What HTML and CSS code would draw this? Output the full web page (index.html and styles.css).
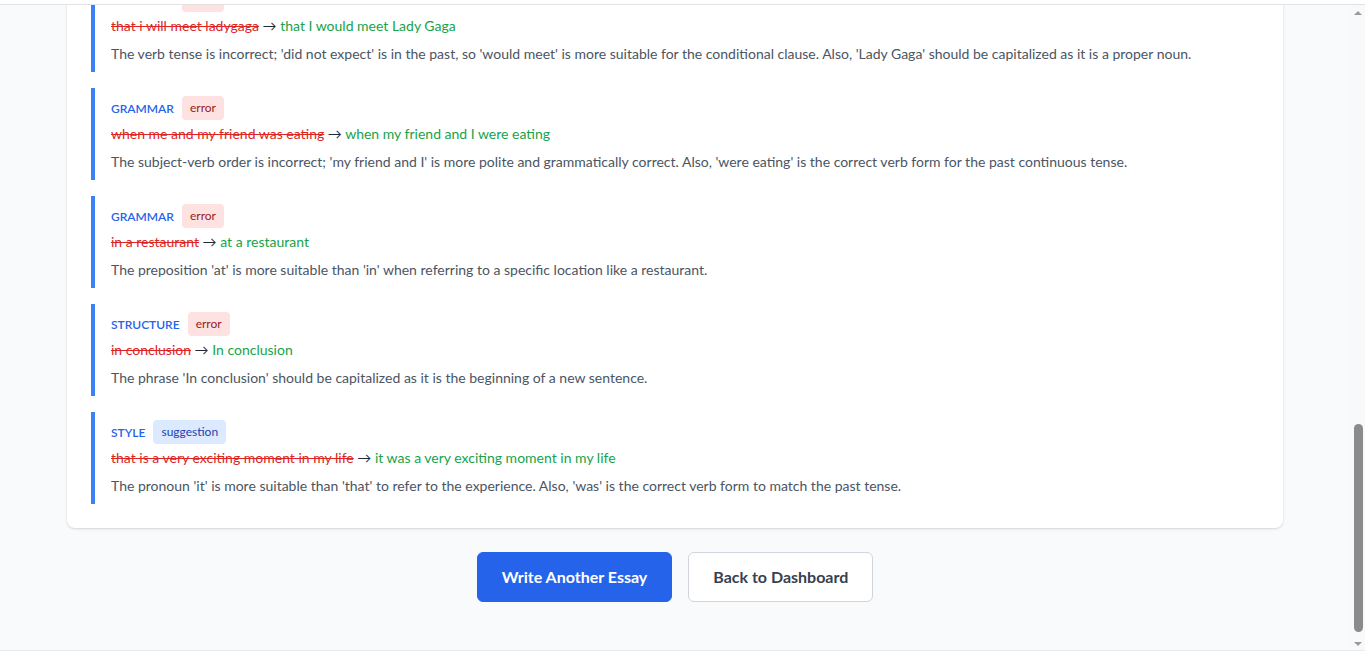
FILE: index.html
```html
<!DOCTYPE html>
<html lang="en">
<head>
  <meta charset="UTF-8">
  <title>Essay Feedback</title>
  <meta name="viewport" content="width=device-width, initial-scale=1.0">
  <link rel="stylesheet" href="styles.css">
</head>
<body>
  <div class="window-top"></div>

  <div class="frame">
    <div class="viewport" id="viewport">
      <main class="page">
        <header class="page-head">
          <h1>Essay Feedback</h1>
          <p>Topic: Describe an unforgettable day</p>
        </header>

        <section class="card score-card">
          <div class="score-main">
            <span class="score-value">6.0</span>
            <span class="score-label">Overall Band</span>
          </div>
          <div class="score-grid">
            <div class="score-item"><span>Task Response</span><strong>6.5</strong></div>
            <div class="score-item"><span>Coherence &amp; Cohesion</span><strong>6.0</strong></div>
            <div class="score-item"><span>Lexical Resource</span><strong>6.0</strong></div>
            <div class="score-item"><span>Grammar Range &amp; Accuracy</span><strong>5.5</strong></div>
          </div>
        </section>

        <section class="card essay-card">
          <h2>Your Essay</h2>
          <p>Yesterday i go to the mall with my friend. We want to buy some new clothes for the party next week. I did not expect that i will meet ladygaga when me and my friend was eating in a restaurant. She was sitting at the table next to us and she was very kind. She take a photo with us and sign my notebook.</p>
          <p>in conclusion that is a very exciting moment in my life. I will never forget this day and I hope I can see her again in her concert.</p>
        </section>

        <section class="card comments-card">
          <h2>Examiner Comments</h2>
          <div class="comments-grid">
            <div>
              <h3>Strengths</h3>
              <ul>
                <li>The story has a clear beginning, middle and end.</li>
                <li>The main event is easy to follow.</li>
                <li>Good use of simple linking words such as 'and' and 'when'.</li>
                <li>The essay answers the question directly.</li>
                <li>Personal feelings are expressed at the end.</li>
                <li>Sentences are short and easy to read.</li>
                <li>Vocabulary is appropriate for the topic.</li>
              </ul>
            </div>
            <div>
              <h3>Areas to Improve</h3>
              <ul>
                <li>Keep verbs in the past tense throughout the narrative.</li>
                <li>Capitalize 'I', names and the first word of each sentence.</li>
                <li>Check the order of subjects such as 'my friend and I'.</li>
                <li>Use more precise prepositions of place.</li>
                <li>Add more detail about how you felt during the meeting.</li>
                <li>Try a wider range of sentence structures.</li>
                <li>Aim for at least 250 words.</li>
              </ul>
            </div>
          </div>
        </section>

        <section class="card feedback-card">
          <h2>Detailed Feedback</h2>
          <div class="issues">
            <div class="issue">
              <div class="issue-head">
                <span class="issue-type">GRAMMAR</span>
                <span class="badge badge-error">error</span>
              </div>
              <div class="issue-fix">
                <span class="fix-old">Yesterday i go</span> &rarr; <span class="fix-new">Yesterday I went</span>
              </div>
              <p class="issue-note">The action happened in the past, so the past tense 'went' is needed. The pronoun 'I' is always capitalized.</p>
            </div>

            <div class="issue">
              <div class="issue-head">
                <span class="issue-type">GRAMMAR</span>
                <span class="badge badge-error">error</span>
              </div>
              <div class="issue-fix">
                <span class="fix-old">We want to buy</span> &rarr; <span class="fix-new">We wanted to buy</span>
              </div>
              <p class="issue-note">Keep the verb tense consistent with the rest of the narrative, which is in the past.</p>
            </div>

            <div class="issue">
              <div class="issue-head">
                <span class="issue-type">GRAMMAR</span>
                <span class="badge badge-error">error</span>
              </div>
              <div class="issue-fix">
                <span class="fix-old">She take a photo with us and sign my notebook</span> &rarr; <span class="fix-new">She took a photo with us and signed my notebook</span>
              </div>
              <p class="issue-note">Both verbs should be in the past tense to match the story.</p>
            </div>

            <div class="issue">
              <div class="issue-head">
                <span class="issue-type">GRAMMAR</span>
                <span class="badge badge-error">error</span>
              </div>
              <div class="issue-fix">
                <span class="fix-old">that i will meet ladygaga</span> &rarr; <span class="fix-new">that I would meet Lady Gaga</span>
              </div>
              <p class="issue-note">The verb tense is incorrect; 'did not expect' is in the past, so 'would meet' is more suitable for the conditional clause. Also, 'Lady Gaga' should be capitalized as it is a proper noun.</p>
            </div>

            <div class="issue">
              <div class="issue-head">
                <span class="issue-type">GRAMMAR</span>
                <span class="badge badge-error">error</span>
              </div>
              <div class="issue-fix">
                <span class="fix-old">when me and my friend was eating</span> &rarr; <span class="fix-new">when my friend and I were eating</span>
              </div>
              <p class="issue-note">The subject-verb order is incorrect; 'my friend and I' is more polite and grammatically correct. Also, 'were eating' is the correct verb form for the past continuous tense.</p>
            </div>

            <div class="issue">
              <div class="issue-head">
                <span class="issue-type">GRAMMAR</span>
                <span class="badge badge-error">error</span>
              </div>
              <div class="issue-fix">
                <span class="fix-old">in a restaurant</span> &rarr; <span class="fix-new">at a restaurant</span>
              </div>
              <p class="issue-note">The preposition 'at' is more suitable than 'in' when referring to a specific location like a restaurant.</p>
            </div>

            <div class="issue">
              <div class="issue-head">
                <span class="issue-type">STRUCTURE</span>
                <span class="badge badge-error">error</span>
              </div>
              <div class="issue-fix">
                <span class="fix-old">in conclusion</span> &rarr; <span class="fix-new">In conclusion</span>
              </div>
              <p class="issue-note">The phrase 'In conclusion' should be capitalized as it is the beginning of a new sentence.</p>
            </div>

            <div class="issue">
              <div class="issue-head">
                <span class="issue-type">STYLE</span>
                <span class="badge badge-suggestion">suggestion</span>
              </div>
              <div class="issue-fix">
                <span class="fix-old">that is a very exciting moment in my life</span> &rarr; <span class="fix-new">it was a very exciting moment in my life</span>
              </div>
              <p class="issue-note">The pronoun 'it' is more suitable than 'that' to refer to the experience. Also, 'was' is the correct verb form to match the past tense.</p>
            </div>
          </div>
        </section>

        <div class="actions">
          <button class="btn btn-primary">Write Another Essay</button>
          <button class="btn btn-secondary">Back to Dashboard</button>
        </div>
      </main>
    </div>

    <div class="scrollbar">
      <div class="scroll-btn"><span class="arrow-up"></span></div>
      <div class="scroll-track" id="track">
        <div class="scroll-thumb" id="thumb"></div>
      </div>
      <div class="scroll-btn"><span class="arrow-down"></span></div>
    </div>
  </div>

  <script>
    const viewport = document.getElementById('viewport');
    const track = document.getElementById('track');
    const thumb = document.getElementById('thumb');

    function syncThumb() {
      const ratio = viewport.clientHeight / viewport.scrollHeight;
      const trackHeight = track.clientHeight;
      const thumbHeight = Math.max(24, Math.round(trackHeight * ratio));
      const maxScroll = viewport.scrollHeight - viewport.clientHeight;
      const pos = maxScroll > 0 ? viewport.scrollTop / maxScroll : 0;
      thumb.style.height = thumbHeight + 'px';
      thumb.style.top = Math.round(pos * (trackHeight - thumbHeight)) + 'px';
    }

    viewport.addEventListener('scroll', syncThumb);

    // results open scrolled down to the action buttons
    viewport.scrollTop = viewport.scrollHeight;
    syncThumb();
  </script>
</body>
</html>
```

FILE: styles.css
```css
body {
  margin: 0;
  height: 100vh;
  display: flex;
  flex-direction: column;
  overflow: hidden;
  font-family: Lato, 'Liberation Sans', Arial, sans-serif;
  background-color: #f9fafb;
  color: #374151;
}

.window-top {
  flex: none;
  height: 4px;
  background-color: #fff;
  border-bottom: 1px solid #e2e2e2;
}

.frame {
  flex: 1;
  min-height: 0;
  display: flex;
  border-bottom: 1px solid #ebebeb;
}

.viewport {
  flex: 1;
  overflow-y: auto;
  scrollbar-width: none;
}

/* page scrollbar */
.scrollbar {
  flex: none;
  width: 15px;
  display: flex;
  flex-direction: column;
  background-color: #f8f9fa;
}

.scroll-btn {
  height: 15px;
  display: flex;
  align-items: center;
  justify-content: center;
  padding-left: 1px;
}

.arrow-up,
.arrow-down {
  width: 0;
  height: 0;
  border-left: 4px solid transparent;
  border-right: 4px solid transparent;
}

.arrow-up {
  border-bottom: 4px solid #9b9b9b;
  margin-top: 1px;
}

.arrow-down {
  border-top: 4px solid #9b9b9b;
  margin-top: 3px;
}

.scroll-track {
  flex: 1;
  position: relative;
  margin-bottom: 3px;
}

.scroll-thumb {
  position: absolute;
  left: 4px;
  right: 2px;
  border-radius: 5px;
  background-color: #8b8b8b;
}

.page {
  max-width: 1280px;
  margin: 0 auto;
  padding: 48px 32px;
  box-sizing: border-box;
}

.page-head h1 {
  margin: 0;
  font-size: 30px;
  color: #111827;
}

.page-head p {
  margin: 8px 0 24px;
  color: #6b7280;
}

.card {
  background-color: #fff;
  border-radius: 8px;
  padding: 24px;
  box-shadow: 0 1px 3px rgba(0, 0, 0, 0.1), 0 1px 2px rgba(0, 0, 0, 0.06);
  margin-bottom: 24px;
}

.card h2 {
  margin: 0 0 16px;
  font-size: 20px;
  color: #111827;
}

.score-card {
  display: flex;
  align-items: center;
  gap: 48px;
}

.score-main {
  display: flex;
  flex-direction: column;
  align-items: center;
}

.score-value {
  font-size: 48px;
  font-weight: 700;
  color: #2563eb;
}

.score-label {
  font-size: 14px;
  color: #6b7280;
}

.score-grid {
  flex: 1;
  display: grid;
  grid-template-columns: repeat(4, 1fr);
  gap: 16px;
}

.score-item {
  display: flex;
  flex-direction: column;
  gap: 4px;
  padding: 16px;
  border-radius: 6px;
  background-color: #f3f4f6;
  font-size: 14px;
}

.score-item strong {
  font-size: 20px;
  color: #111827;
}

.essay-card p {
  margin: 0 0 12px;
  font-size: 15px;
  line-height: 26px;
}

.comments-grid {
  display: grid;
  grid-template-columns: 1fr 1fr;
  gap: 32px;
}

.comments-grid h3 {
  margin: 0 0 12px;
  font-size: 16px;
  line-height: 24px;
  color: #111827;
}

.comments-grid ul {
  margin: 0;
  padding-left: 20px;
}

.comments-grid li {
  font-size: 14px;
  line-height: 24px;
  margin-bottom: 4px;
}

.feedback-card {
  margin-bottom: 0;
}

.issues {
  display: flex;
  flex-direction: column;
  gap: 16px;
}

.issue {
  border-left: 4px solid #3b82f6;
  padding: 8px 16px;
}

.issue-head {
  display: flex;
  align-items: center;
  gap: 8px;
  height: 24px;
}

.issue-type {
  font-size: 12px;
  font-weight: 600;
  color: #2563eb;
}

.badge {
  font-size: 12px;
  line-height: 16px;
  padding: 4px 8px;
  border-radius: 4px;
}

.badge-error {
  background-color: #fee2e2;
  color: #991b1b;
}

.badge-suggestion {
  background-color: #dbeafe;
  color: #1e40af;
}

.issue-fix {
  margin-top: 4px;
  font-size: 14px;
  line-height: 20px;
  color: #1f2937;
}

.fix-old {
  color: #dc2626;
  text-decoration: line-through;
}

.fix-new {
  color: #16a34a;
}

.issue-note {
  margin: 8px 0 0;
  font-size: 14px;
  line-height: 20px;
  color: #4b5563;
}

.actions {
  display: flex;
  justify-content: center;
  gap: 16px;
  margin-top: 24px;
}

.btn {
  font-family: inherit;
  font-size: 16px;
  font-weight: 700;
  line-height: 24px;
  padding: 12px 24px;
  border-radius: 6px;
  cursor: pointer;
}

.btn-primary {
  background-color: #2563eb;
  border: 1px solid #2563eb;
  color: #fff;
}

.btn-secondary {
  background-color: #fff;
  border: 1px solid #d1d5db;
  color: #374151;
}
```
